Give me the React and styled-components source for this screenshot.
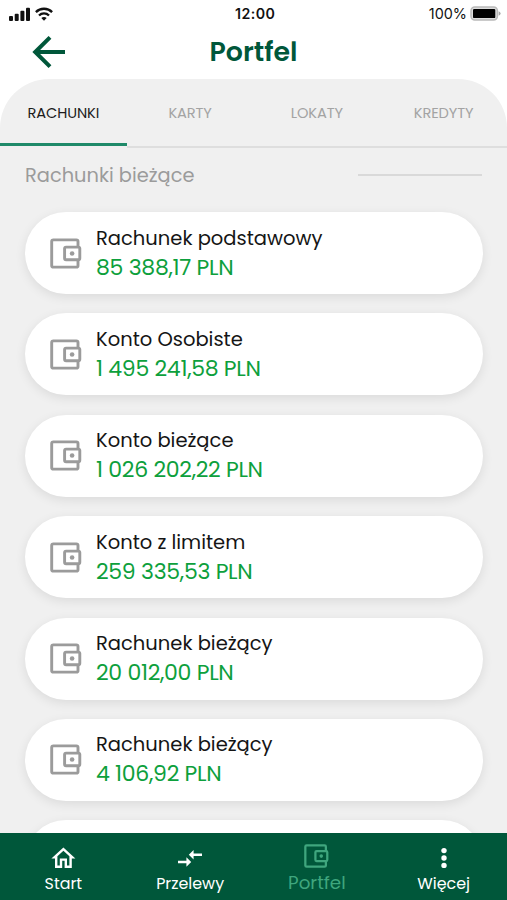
/* eslint-disable react/prop-types */
import * as React from 'react'
import styled, { createGlobalStyle } from 'styled-components'

const colors = {
    brand: '#00573a',
    accent: '#1f8a69',
    navActive: '#3fa67e',
    amount: '#0da03c',
    panel: '#f0f0f0',
    muted: '#9b9b9b',
}

const GlobalStyle = createGlobalStyle`
    *, *::before, *::after { box-sizing: border-box; }
    html, body { margin: 0; height: 100%; overflow: hidden; }
    body { background: #fff; font-family: Poppins, 'Inter', 'Open Sans', sans-serif; }
`

const Screen = styled.div`
    display: flex;
    flex-direction: column;
    height: 900px;
    width: 507px;
    overflow: hidden;
    background: #fff;
`
/* text */
const Text = styled.span`
    display: block;
    white-space: nowrap;
    letter-spacing: ${({ $track }) => $track || 0}px;
    margin-right: ${({ $track }) => -($track || 0)}px;
`
/* status bar */
const StatusBar = styled.div`
    flex: none;
    display: grid;
    grid-template-columns: 1fr auto 1fr;
    align-items: center;
    height: 27px;
    padding: 0 6px 0 9px;
    font-family: 'Inter', sans-serif;
    color: #111;
`
const Signals = styled.div`
    display: flex;
    gap: 5px;
    align-items: center;
`
const Clock = styled(Text)`
    font-size: 14.2px;
    font-weight: 600;
`
const Power = styled.div`
    display: flex;
    align-items: center;
    justify-content: flex-end;
    gap: 3px;
    font-size: 14.4px;
`
/* header */
const Header = styled.header`
    flex: none;
    display: grid;
    grid-template-columns: 1fr auto 1fr;
    align-items: center;
    height: 52px;
    padding: 0 32px 3px;
    color: ${colors.brand};
`
const Title = styled.h1`
    margin: 0;
    padding-top: 1px;
    font-size: 26.8px;
    line-height: 30px;
    font-weight: 600;
`
/* panel */
const Panel = styled.main`
    flex: 1;
    min-height: 0;
    display: flex;
    flex-direction: column;
    overflow: hidden;
    background: ${colors.panel};
    border-radius: 49px 49px 0 0;
`
const Tabs = styled.nav`
    flex: none;
    display: grid;
    grid-template-columns: repeat(4, 1fr);
    height: 69px;
`
const Tab = styled.div`
    display: flex;
    align-items: center;
    justify-content: center;
    padding-top: 5px;
    font-size: 14.6px;
    color: ${({ $active }) => ($active ? '#1c1c1c' : '#a3a3a3')};
    border-bottom: ${({ $active }) => ($active ? `3px solid ${colors.accent}` : '2px solid #dedede')};
    margin-bottom: ${({ $active }) => ($active ? '2px' : '0')};
    padding-bottom: ${({ $active }) => ($active ? '0' : '3px')};
`
const Section = styled.div`
    flex: none;
    display: flex;
    align-items: center;
    justify-content: space-between;
    height: 54px;
    padding: 0 25px;
    font-size: 19.4px;
    color: ${colors.muted};
`
const Rule = styled.div`
    width: 124px;
    height: 2px;
    background: #d9d9d9;
`
const List = styled.div`
    display: flex;
    flex-direction: column;
    gap: 19.4px;
    padding: 10px 24.5px 0 25px;
`
const Card = styled.article`
    flex: none;
    display: flex;
    align-items: center;
    gap: 14px;
    height: 82px;
    padding: 0 25px;
    border-radius: 41px;
    background: #fff;
    box-shadow: 0 3px 11px rgba(0, 0, 0, 0.09);
`
const CardIcon = styled.div`
    display: flex;
    color: ${colors.muted};
`
const CardText = styled.div`
    display: flex;
    flex-direction: column;
`
const Name = styled(Text)`
    font-size: 19.5px;
    line-height: 28px;
    color: #151515;
`
const Amount = styled(Text)`
    font-size: 22px;
    line-height: 29px;
    color: ${colors.amount};
`
/* bottom nav */
const BottomNav = styled.nav`
    flex: none;
    display: grid;
    grid-template-columns: repeat(4, 1fr);
    height: 67px;
    background: ${colors.brand};
`
const NavItem = styled.div`
    display: flex;
    flex-direction: column;
    align-items: center;
    color: ${({ $active }) => ($active ? colors.navActive : '#fff')};
    font-size: ${({ $active }) => ($active ? '18.3px' : '15.9px')};
    line-height: ${({ $active }) => ($active ? '24px' : '26px')};
`
const NavIcon = styled.div`
    display: flex;
    align-items: center;
    justify-content: center;
    height: 38px;
    padding-top: ${({ $active }) => ($active ? '8px' : '12px')};
`

const Wallet = ({ width = 32 }) => (
    <svg width={width} height={width * 0.96875} viewBox="0 0 32 31" fill="none" stroke="currentColor" strokeWidth="2.9">
        <path d="M28 9.2V3.6Q28 1.9 26.3 1.9H3.4Q1.7 1.9 1.7 3.6V27.4Q1.7 29.1 3.4 29.1H26.3Q28 29.1 28 27.4V21.8" />
        <rect x="14.6" y="9.1" width="15.2" height="12.7" rx="1.5" />
        <circle cx="22.1" cy="15.5" r="2.3" fill="currentColor" stroke="none" />
    </svg>
)
const Home = () => (
    <svg width="28.8" height="28.8" viewBox="0 0 24 24" fill="currentColor">
        <path d="M12 5.69l5 4.5V18h-2v-6H9v6H7v-7.81l5-4.5M12 3L2 12h3v8h6v-6h2v6h6v-8h3L12 3z" />
    </svg>
)
const Transfers = () => (
    <svg width="30" height="28.8" viewBox="0 0 24 24" fill="currentColor">
        <path d="M9.01 14H2v2h7.01v3L13 15l-3.99-4v3zm5.98-1v-3H22V8h-7.01V5L11 9l3.99 4z" />
    </svg>
)
const More = () => (
    <svg width="8" height="22" viewBox="0 0 8 22" fill="currentColor">
        <circle cx="4" cy="3.6" r="2.7" />
        <circle cx="4" cy="11" r="2.7" />
        <circle cx="4" cy="18.4" r="2.7" />
    </svg>
)
const Cellular = () => (
    <svg width="21" height="14" viewBox="0 0 21 14" fill="currentColor">
        <rect x="0" y="9" width="4" height="5" rx="1" />
        <rect x="5.7" y="6.7" width="4" height="7.3" rx="1" />
        <rect x="11.4" y="3.8" width="4" height="10.2" rx="1" />
        <rect x="17" y="0.7" width="4" height="13.3" rx="1" />
    </svg>
)
const Wifi = () => (
    <svg width="18" height="14" viewBox="0 0 18 14" fill="none" stroke="currentColor" strokeWidth="2.3">
        <path d="M0.9 5.1C5.3 0.6 12.7 0.6 17.1 5.1" />
        <path d="M4 8.5C6.8 5.7 11.2 5.7 14 8.5" />
        <path d="M9 13.8L6.3 11.1C7.8 9.7 10.2 9.7 11.7 11.1Z" fill="currentColor" stroke="none" />
    </svg>
)
const Battery = () => (
    <svg width="31" height="16" viewBox="0 0 31 16">
        <rect x="1" y="1" width="26.4" height="13" rx="3.8" fill="#ddd" stroke="#b9b9b9" strokeWidth="1.5" />
        <rect x="3" y="2.9" width="22.3" height="9.2" rx="1.2" fill="#000" />
        <path d="M28.6 5.2Q30.6 5.9 30.6 7.5T28.6 9.8Z" fill="#a6a6a6" />
    </svg>
)
const Back = () => (
    <svg width="33" height="32" viewBox="0 0 33 32" fill="none" stroke="currentColor" strokeWidth="4">
        <path d="M33 16H3M18 1.4L3.2 16L18 30.6" />
    </svg>
)

const tabs = ['RACHUNKI', 'KARTY', 'LOKATY', 'KREDYTY']
const accounts = [
    { name: 'Rachunek podstawowy', amount: '85 388,17 PLN' },
    { name: 'Konto Osobiste', amount: '1 495 241,58 PLN' },
    { name: 'Konto bieżące', amount: '1 026 202,22 PLN' },
    { name: 'Konto z limitem', amount: '259 335,53 PLN' },
    { name: 'Rachunek bieżący', amount: '20 012,00 PLN' },
    { name: 'Rachunek bieżący', amount: '4 106,92 PLN' },
    { name: '', amount: '' },
]
const navItems = [
    { label: 'Start', icon: <Home /> },
    { label: 'Przelewy', icon: <Transfers /> },
    { label: 'Portfel', icon: <Wallet width={25} />, active: true },
    { label: 'Więcej', icon: <More /> },
]

const AccountCard = ({ name, amount }) => (
    <Card>
        <CardIcon><Wallet /></CardIcon>
        <CardText>
            <Name>{name}</Name>
            <Amount $track={-0.3}>{amount}</Amount>
        </CardText>
    </Card>
)

const App = () => (
    <Screen>
        <GlobalStyle />
        <StatusBar>
            <Signals><Cellular /><Wifi /></Signals>
            <Clock $track={0.45}>12:00</Clock>
            <Power><Text>100%</Text><Battery /></Power>
        </StatusBar>
        <Header>
            <Back />
            <Title>Portfel</Title>
        </Header>
        <Panel>
            <Tabs>
                {tabs.map((label, i) => <Tab key={label} $active={i === 0}><Text $track={-0.1}>{label}</Text></Tab>)}
            </Tabs>
            <Section>
                <Text>Rachunki bieżące</Text>
                <Rule />
            </Section>
            <List>
                {accounts.map((account, i) => <AccountCard key={`account-${i}`} {...account} />)}
            </List>
        </Panel>
        <BottomNav>
            {navItems.map(({ label, icon, active }) => (
                <NavItem key={label} $active={active}>
                    <NavIcon $active={active}>{icon}</NavIcon>
                    <Text>{label}</Text>
                </NavItem>
            ))}
        </BottomNav>
    </Screen>
)

export default App
